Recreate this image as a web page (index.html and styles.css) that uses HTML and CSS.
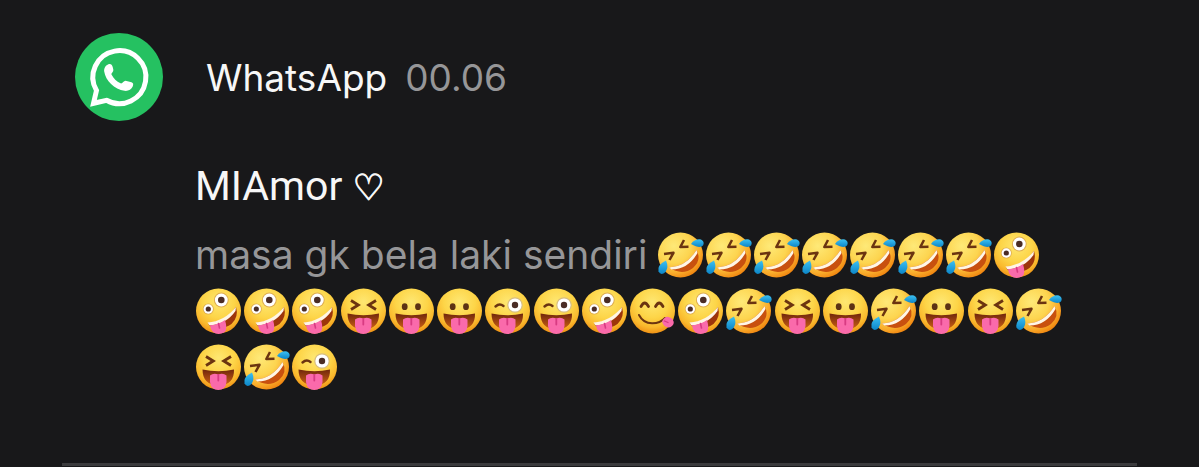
FILE: index.html
```
<!DOCTYPE html>
<html lang="id">
<head>
  <meta charset="UTF-8" />
  <meta name="viewport" content="width=device-width, initial-scale=1" />
  <title>Notifikasi WhatsApp</title>
  <link rel="stylesheet" href="styles.css">
</head>
<body>

  <!-- Emoji shapes, reused below -->
  <svg class="defs" aria-hidden="true">
    <defs>
      <radialGradient id="skin" cx="0.5" cy="0.3" r="0.7">
        <stop offset="0" stop-color="#fee772"/>
        <stop offset="0.5" stop-color="#fdd548"/>
        <stop offset="0.8" stop-color="#fab92d"/>
        <stop offset="1" stop-color="#ef9115"/>
      </radialGradient>
      <radialGradient id="skinRofl" cx="0.35" cy="0.3" r="0.75">
        <stop offset="0" stop-color="#fee978"/>
        <stop offset="0.5" stop-color="#fdd550"/>
        <stop offset="0.8" stop-color="#f9ac2b"/>
        <stop offset="1" stop-color="#f0840f"/>
      </radialGradient>
      <linearGradient id="tear" x1="0" y1="0" x2="0" y2="1">
        <stop offset="0" stop-color="#3cc0f2"/>
        <stop offset="1" stop-color="#0c86c8"/>
      </linearGradient>
      <linearGradient id="inside" x1="0" y1="0" x2="0" y2="1">
        <stop offset="0" stop-color="#70260c"/>
        <stop offset="1" stop-color="#cf6214"/>
      </linearGradient>

      <g id="mouth">
        <path d="M7.500 26.500Q23.500 30 39 26.500Q39.500 42 23.500 42.500Q7.500 42 7.500 26.500Z" fill="url(#inside)"/>
        <path d="M15 32.500Q18.500 29.500 23.300 31.500Q28 29.500 31.500 32.500L31.500 39Q30.500 47 23.300 47Q16 47 15 39Z" fill="#fa6aab"/>
        <path d="M23.300 32V37.500" stroke="#d83b82" stroke-width="1.800" stroke-linecap="round"/>
      </g>

      <symbol id="rofl" viewBox="0 0 48 48">
        <circle cx="23.500" cy="24" r="22.500" fill="url(#skinRofl)"/>
        <g fill="none" stroke="#6b3410" stroke-width="2.500" stroke-linejoin="round">
          <path d="M7 23L16.500 21.800L12.500 29"/>
          <path d="M27 9L23.300 16L31.500 15.800"/>
        </g>
        <path d="M12 36.500Q29 36 39.500 19Q45 29 36 37Q25 45 12 36.500Z" fill="#c8500f"/>
        <path d="M12 36.500Q29 36 39.500 19L40.500 22Q31 38.500 14.500 38.500Z" fill="#fff6e6"/>
        <path d="M34 13Q38 7.500 44 8.500Q48 10.500 46 14.500Q43 18 34 13Z" fill="url(#tear)"/>
        <path d="M9 29.500Q12 36 8.500 41Q4 45 1.500 40.500Q0 34 9 29.500Z" fill="url(#tear)"/>
      </symbol>

      <symbol id="zany" viewBox="0 0 48 48">
        <circle cx="23.500" cy="24" r="22.500" fill="url(#skin)"/>
        <circle cx="26.300" cy="13" r="7.400" fill="#dfae50"/>
        <circle cx="26.300" cy="13" r="6.400" fill="#fff"/>
        <circle cx="26.300" cy="13" r="3.300" fill="#4a2c25"/>
        <circle cx="13.300" cy="22" r="5.500" fill="#dfae50"/>
        <circle cx="13.300" cy="22" r="4.700" fill="#fff"/>
        <circle cx="13.300" cy="22" r="2.600" fill="#4a2c25"/>
        <path d="M13 36Q30 35 41 20Q44 30 36.500 37Q27 44 14.500 39Z" fill="#9d350b"/>
        <path d="M12.500 35.500Q29 34.500 41 20L40.500 24Q31 37.500 14.500 38.500Z" fill="#fff5e6"/>
        <path d="M15 38.300Q24 37.500 30 33Q33 43 29 45.500Q23 48.500 18 45Q15.500 43 15 38.300Z" fill="#fa6aab"/>
        <path d="M23.500 36.500L24.500 41" stroke="#d83b82" stroke-width="1.600" stroke-linecap="round"/>
      </symbol>

      <symbol id="squint" viewBox="0 0 48 48">
        <circle cx="23.500" cy="24" r="22.500" fill="url(#skin)"/>
        <g fill="none" stroke="#6b3410" stroke-width="2.800" stroke-linejoin="miter">
          <path d="M11 13.500L18.300 18L11 22.500"/>
          <path d="M36 13.500L28.700 18L36 22.500"/>
        </g>
        <use href="#mouth"/>
      </symbol>

      <symbol id="tongue" viewBox="0 0 48 48">
        <circle cx="23.500" cy="24" r="22.500" fill="url(#skin)"/>
        <ellipse cx="16.700" cy="19.700" rx="2.900" ry="3.400" fill="#5c3214"/>
        <ellipse cx="30" cy="19.700" rx="2.900" ry="3.400" fill="#5c3214"/>
        <use href="#mouth"/>
      </symbol>

      <symbol id="wink" viewBox="0 0 48 48">
        <circle cx="23.500" cy="24" r="22.500" fill="url(#skin)"/>
        <path d="M11.500 19.500Q15.500 15.800 19.500 19" fill="none" stroke="#6b3410" stroke-width="2.400" stroke-linecap="round"/>
        <circle cx="31" cy="18" r="7.800" fill="#d8be80"/>
        <circle cx="31" cy="18" r="6.600" fill="#fff"/>
        <circle cx="31" cy="18" r="3.200" fill="#4a2c25"/>
        <use href="#mouth"/>
      </symbol>

      <symbol id="yum" viewBox="0 0 48 48">
        <circle cx="23.500" cy="24" r="22.500" fill="url(#skin)"/>
        <g fill="none" stroke="#6b3410" stroke-linecap="round">
          <path d="M12 19.500Q15.700 12.500 19.500 19.500" stroke-width="2.800"/>
          <path d="M26.500 19.500Q30.200 12.500 34 19.500" stroke-width="2.800"/>
          <path d="M10 28Q14 36 23 36.300Q31 36.500 36 31" stroke-width="2"/>
        </g>
        <path d="M33 34.500Q36 29 39.500 30Q45.500 31.500 44.500 37Q42 41.500 37.500 40Q34.500 39 33 34.500Z" fill="#fa6aab"/>
        <path d="M35.500 34L39 35.500" stroke="#d83b82" stroke-width="1.300" stroke-linecap="round"/>
      </symbol>
    </defs>
  </svg>

  <article class="notification">
    <svg class="app-icon" viewBox="0 0 88 88" role="img" aria-label="WhatsApp">
      <circle cx="44" cy="44" r="44" fill="#25c161"/>
      <path d="M21.500 57.500A26.500 26.500 0 1 1 31.500 67.300L18.500 70.300Z" fill="none" stroke="#fff" stroke-width="5" stroke-linejoin="miter"/>
      <path d="M33 31.500C35.500 30.500 37 31.500 37.700 34L38.300 36.500C38.700 39 36 40 36.500 41.500C38.500 45.500 41.500 48.500 45.500 50.300C47.500 51 48.500 47.700 50.500 47.700L56.500 49.300C58.500 50 58.500 51.500 57.700 53.500C56.500 56.500 53 58.300 49.500 57.800C39.500 56.500 30.500 47.500 29.200 38.500C28.800 35.500 30.500 32.500 33 31.500Z" fill="#fff"/>
    </svg>

    <header class="app-line">
      <span class="app-name">WhatsApp</span>
      <time class="time" datetime="00:06">00.06</time>
    </header>

    <div class="content">
      <h1 class="sender">MIAmor <span class="heart">♡</span></h1>
      <div class="message">
        <p class="first-line">
          <span class="text">masa gk bela laki sendiri</span>
          <span class="emojis">
            <svg><use href="#rofl"/></svg>
            <svg><use href="#rofl"/></svg>
            <svg><use href="#rofl"/></svg>
            <svg><use href="#rofl"/></svg>
            <svg><use href="#rofl"/></svg>
            <svg><use href="#rofl"/></svg>
            <svg><use href="#rofl"/></svg>
            <svg><use href="#zany"/></svg>
          </span>
        </p>
        <p class="emoji-grid">
          <svg><use href="#zany"/></svg>
          <svg><use href="#zany"/></svg>
          <svg><use href="#zany"/></svg>
          <svg><use href="#squint"/></svg>
          <svg><use href="#tongue"/></svg>
          <svg><use href="#tongue"/></svg>
          <svg><use href="#wink"/></svg>
          <svg><use href="#wink"/></svg>
          <svg><use href="#zany"/></svg>
          <svg><use href="#yum"/></svg>
          <svg><use href="#zany"/></svg>
          <svg><use href="#rofl"/></svg>
          <svg><use href="#squint"/></svg>
          <svg><use href="#tongue"/></svg>
          <svg><use href="#rofl"/></svg>
          <svg><use href="#tongue"/></svg>
          <svg><use href="#squint"/></svg>
          <svg><use href="#rofl"/></svg>
          <svg><use href="#squint"/></svg>
          <svg><use href="#rofl"/></svg>
          <svg><use href="#wink"/></svg>
        </p>
      </div>
    </div>
  </article>

  <hr class="divider">

</body>
</html>
```
FILE: styles.css
```
:root{
  --bg:#18181a;
  --text:#f7f7f7;
  --muted:#969698;
  --line:#3b3b3d;
}
*{box-sizing:border-box}
body{
  margin:0;
  background:var(--bg);
  color:var(--text);
  font-family:Roboto,"Liberation Sans",sans-serif;
}
.defs{position:absolute;width:0;height:0}

/* ---------- Notification ---------- */
.notification{
  display:grid;
  grid-template-columns:88px 1fr;
  column-gap:32px;
  row-gap:37px;
  padding:33px 62px 68px 75px;
}
.app-icon{width:88px;height:88px}
.app-line{
  display:flex;
  align-items:center;
  gap:18px;
  padding-left:11px;
  font-family:Inter,sans-serif;
  font-size:37px;
}
.time{color:var(--muted)}

.content{grid-column:2}
.sender{
  margin:0;
  font-size:41px;
  line-height:56px;
  font-weight:400;
}
.heart{
  font-family:"DejaVu Sans",sans-serif;
  font-size:36px;
  line-height:1;
  -webkit-text-stroke:1px var(--text);
}

/* ---------- Message ---------- */
.message{
  max-width:868px;
  margin-top:13px;
  color:var(--muted);
  font-family:Inter,sans-serif;
  font-size:39px;
  line-height:56px;
}
.message p{margin:0}
.first-line{
  display:flex;
  justify-content:space-between;
  padding-right:22px;
}
.text{white-space:nowrap}
.emojis{display:flex;align-items:center}
.emojis svg,
.emoji-grid svg{width:48px;height:48px}
.emoji-grid{
  display:grid;
  grid-template-columns:repeat(18,1fr);
  grid-auto-rows:56px;
  align-items:center;
}

.divider{
  height:3px;
  margin:0 62px 2px;
  border:0;
  background:var(--line);
}
```
